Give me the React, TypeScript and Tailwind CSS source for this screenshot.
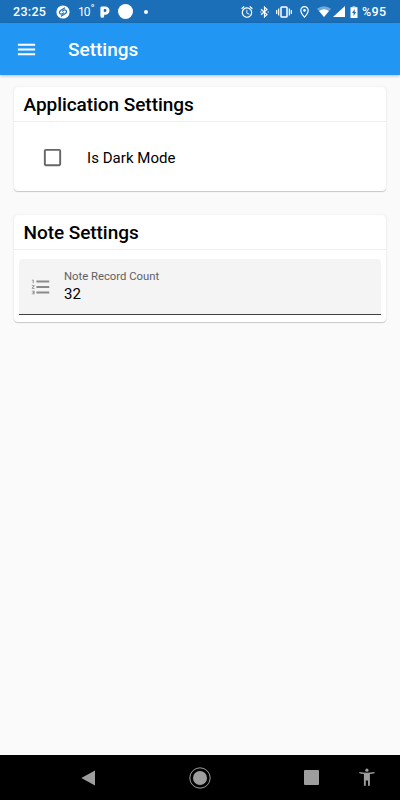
import type { ReactNode } from "react";
import {
	MdAlarm,
	MdCheckBoxOutlineBlank,
	MdFormatListNumbered,
	MdMenu,
} from "react-icons/md";

interface CardProps {
	title: string;
	className: string;
	children: ReactNode;
}

function ShazamIcon() {
	return (
		<svg width="14" height="14" viewBox="0 0 14 14" fill="none">
			<circle cx="7" cy="7" r="6.6" fill="#fff" />
			<path
				d="M8.6 2.9 5 5.2C3.3 6.3 3.1 7.7 4 8.7c.9.9 2.1.5 3.5-.9M5.4 11.1 9 8.8c1.7-1.1 1.9-2.5 1-3.5-.9-.9-2.1-.5-3.5.9"
				stroke="#1a6fb8"
				strokeWidth="1.2"
				strokeLinecap="round"
			/>
		</svg>
	);
}

function ParkingIcon() {
	return (
		<svg width="10" height="12" viewBox="0 0 10 12">
			<path
				fill="#fff"
				fillRule="evenodd"
				d="M.4 5V1.8A1.4 1.4 0 0 1 1.8.4h3.5a4.1 4.1 0 0 1 0 8.4H4.2v1.1a1.9 1.9 0 0 1-3.8 0V5zm3.4-1.9v2.8h1.3a1.4 1.4 0 0 0 0-2.8z"
			/>
		</svg>
	);
}

function BluetoothIcon() {
	return (
		<svg width="9" height="12" viewBox="0 0 9 12" fill="none" stroke="#fff">
			<path d="m1 3.3 6 5.3-2.5 2.3V1.1L7 3.4 1 8.7" strokeWidth="1.2" />
			<path d="M.2 6h1.2M7.6 6h1.2" strokeWidth="1.2" />
		</svg>
	);
}

function VibrationIcon() {
	return (
		<svg width="16" height="12" viewBox="0 0 16 12" fill="none" stroke="#fff">
			<rect x="5" y="1" width="6" height="10" rx=".8" strokeWidth="1.5" />
			<path d="M2.7 2.5v7M13.3 2.5v7" strokeWidth="1.2" />
			<path d="M.7 4v4M15.3 4v4" strokeWidth="1.2" />
		</svg>
	);
}

function PlaceIcon() {
	return (
		<svg width="9" height="12" viewBox="0 0 9 12">
			<path
				d="M4.5.7a3.7 3.7 0 0 0-3.7 3.7c0 2.5 3.7 6.7 3.7 6.7s3.7-4.2 3.7-6.7A3.7 3.7 0 0 0 4.5.7z"
				fill="none"
				stroke="#fff"
				strokeWidth="1.2"
			/>
			<circle cx="4.5" cy="4.4" r="1.3" fill="#fff" />
		</svg>
	);
}

function WifiIcon() {
	return (
		<svg width="14" height="11" viewBox="0 0 14 11">
			<path d="M0 2.8Q7-2.4 14 2.8L7 11z" fill="#fff" fillOpacity=".4" />
			<path d="M2.1 5.1Q7 1.6 11.9 5.1L7 11z" fill="#fff" />
		</svg>
	);
}

function BatteryIcon() {
	return (
		<svg width="8" height="12" viewBox="0 0 8 12">
			<path d="M2.4 0h3v1.2h-3z" fill="#fff" fillOpacity=".5" />
			<path d="M.5 1.2h7V12h-7z" fill="#fff" />
			<path d="M4.7 3 2 7h1.6v3L6.2 6H4.7z" fill="#1a6fb8" />
		</svg>
	);
}

function AccessibilityIcon() {
	return (
		<svg
			className="relative -top-px ml-[40px]"
			width="16"
			height="18"
			viewBox="0 0 16 18"
			fill="currentColor"
		>
			<circle cx="7.9" cy="2.2" r="1.6" />
			<path d="M.3 3.9Q7.9 5.5 15.5 3.9v1.3q-2.1.7-4.6.9v11.7H9v-5.4H6.8v5.4H4.9V6.1Q2.4 5.9.3 5.2z" />
		</svg>
	);
}

function StatusBar() {
	return (
		<div className="flex h-[23px] items-center bg-[#1a6fb8] pl-[13px] pr-[13px] text-[12.5px] leading-none text-white">
			<span className="w-[43px] pt-[2px] font-medium tracking-[0.3px]">
				23:25
			</span>
			<ShazamIcon />
			<span className="ml-[8px] flex w-[22px] whitespace-nowrap pt-px text-[12px] tracking-[-1px]">
				10<span className="relative -top-[3px] ml-px text-[11px]">°</span>
			</span>
			<ParkingIcon />
			<span className="ml-[8px] size-[15px] rounded-full bg-white" />
			<span className="ml-[11px] size-1 rounded-full bg-white" />
			<div className="ml-auto flex items-center">
				<MdAlarm size={14} />
				<span className="ml-[6px]">
					<BluetoothIcon />
				</span>
				<span className="ml-[7px]">
					<VibrationIcon />
				</span>
				<span className="ml-[8px]">
					<PlaceIcon />
				</span>
				<span className="ml-[8px]">
					<WifiIcon />
				</span>
				<svg className="ml-[2px]" width="12" height="11" viewBox="0 0 12 11">
					<path d="M12 0v11H0z" fill="#fff" />
				</svg>
				<span className="ml-[5px]">
					<BatteryIcon />
				</span>
				<span className="ml-1 w-[25px] whitespace-nowrap pt-[2px] font-medium tracking-[0.3px]">
					%95
				</span>
			</div>
		</div>
	);
}

function Card({ title, className, children }: CardProps) {
	return (
		<section
			className={`flex flex-col rounded bg-white shadow-[0_1px_1px_rgba(0,0,0,0.18),0_0_2px_rgba(0,0,0,0.1)] ${className}`}
		>
			<h2 className="h-[35px] border-b border-[#eeeeee] pl-[9.5px] text-[19px] font-medium leading-[35px] tracking-[-0.05px]">
				{title}
			</h2>
			{children}
		</section>
	);
}

function NavigationBar() {
	return (
		<div className="flex h-[45px] items-center bg-black pl-[81px] text-[#9e9e9e]">
			<svg width="14" height="16" viewBox="0 0 14 16">
				<path d="M14 .5v15L.3 8z" fill="currentColor" />
			</svg>
			<svg className="ml-[94px]" width="22" height="22" viewBox="0 0 22 22">
				<circle cx="11" cy="11" r="10.2" fill="none" stroke="currentColor" />
				<circle cx="11" cy="11" r="7" fill="currentColor" />
			</svg>
			<span className="ml-[93px] size-[15px] rounded-[1px] bg-current" />
			<AccessibilityIcon />
		</div>
	);
}

export default function App() {
	return (
		<div className="flex h-[800px] w-[400px] flex-col overflow-hidden bg-[#fafafa] font-[Roboto,sans-serif] text-black">
			<StatusBar />
			<header className="flex h-[52px] items-center bg-[#2196f3] pl-[15px] text-white shadow-[0_1px_3px_rgba(0,0,0,0.25)]">
				<MdMenu size={23} />
				<h1 className="ml-[30px] pt-[2px] text-[19px] font-medium">Settings</h1>
			</header>
			<main className="flex-1 px-[14px] pt-3">
				<Card title="Application Settings" className="h-[104px]">
					<div className="flex flex-1 items-center pl-[27px] pt-[2px]">
						<MdCheckBoxOutlineBlank size={23} className="text-[#666666]" />
						<span className="ml-[23px] pt-px text-[15px] tracking-[0.05px]">
							Is Dark Mode
						</span>
					</div>
				</Card>
				<Card title="Note Settings" className="mt-6 h-[107px]">
					<div className="mx-[5px] mt-[9px] flex h-[56px] items-center rounded-t border-b border-[#424242] bg-[#f4f4f4] pl-[11px]">
						<MdFormatListNumbered size={22} className="text-[#8a8a8a]" />
						<div className="ml-[12px] flex flex-col">
							<span className="text-[11.3px] leading-[15px] text-[#606060]">
								Note Record Count
							</span>
							<span className="text-[15px] leading-5">32</span>
						</div>
					</div>
				</Card>
			</main>
			<NavigationBar />
		</div>
	);
}
